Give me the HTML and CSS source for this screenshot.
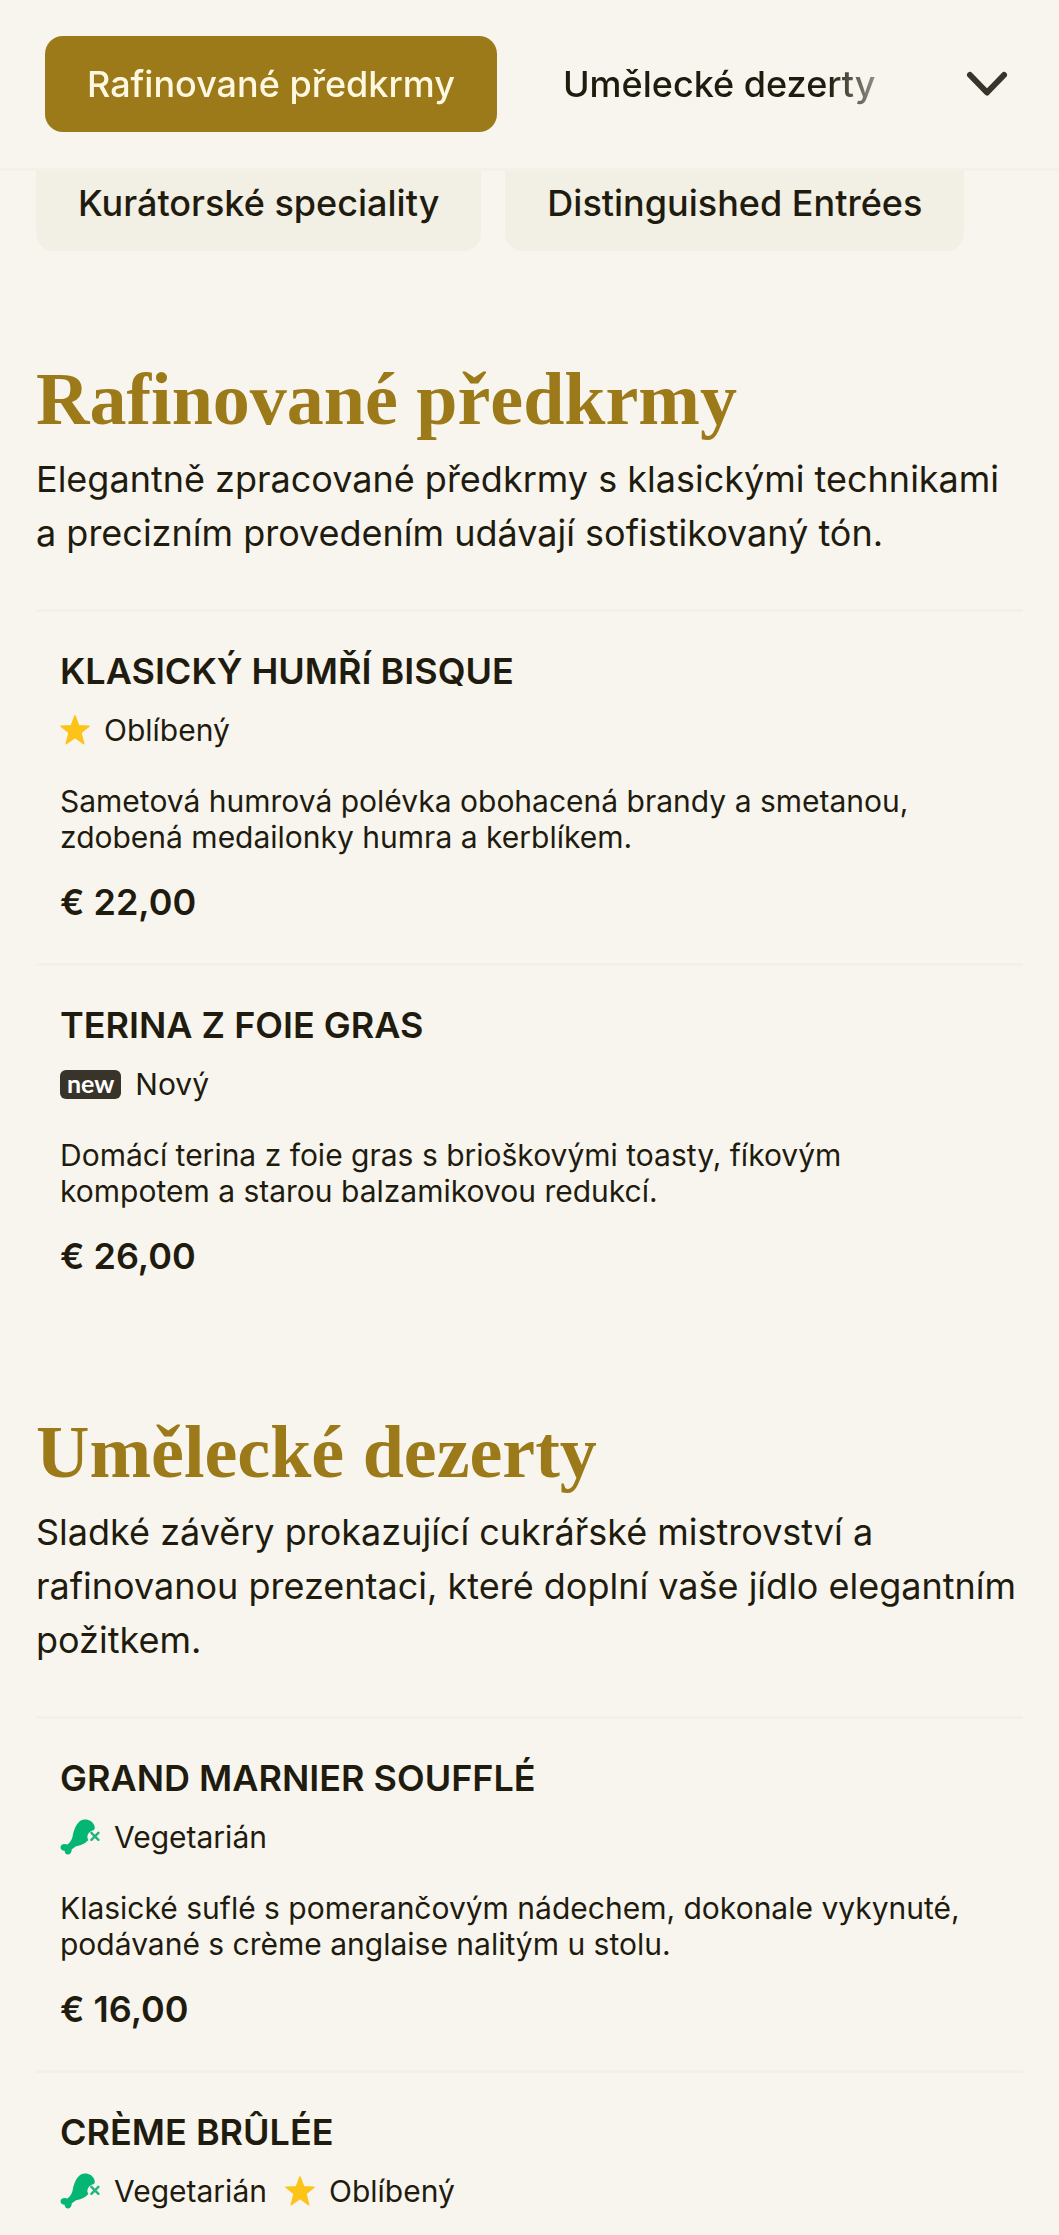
FILE: index.html
```
<!DOCTYPE html>
<html lang="cs">
<head>
    <meta charset="UTF-8">
    <meta name="viewport" content="width=device-width, initial-scale=1.0">
    <title>Menu</title>
    <link rel="stylesheet" href="styles.css">
</head>
<body>
    <!-- Shared icons -->
    <svg class="icon-defs" aria-hidden="true">
        <symbol id="icon-star" viewBox="0 0 30 30">
            <path d="M15 1 L18.6 10.8 L29 11.200 L20.800 17.700 L23.700 28.600 L15 22.400 L6.300 28.600 L9.200 17.700 L1 11.200 L11.400 10.800 Z" fill="#fcc419" stroke="#fcc419" stroke-width="1.600" stroke-linejoin="round"/>
        </symbol>
        <symbol id="icon-veggie" viewBox="0 0 40 36">
            <path d="M12.6 17.500 C13.600 12 15.500 6 19.500 2.600 C24.500 -1.200 32 .5 34.400 6.800 C35 8.500 34.900 10 34 11 C31 11.800 28 13.800 27.400 17 C27.200 18.700 27.800 20 28.400 21 C25 25 20.500 26.200 15.600 27.400 L11.600 30.600 C12 33 10.200 35.600 7.800 35.600 C5.800 35.600 4.800 34 4.600 31.800 C2 31.600 .5 30.200 .5 28.300 C.6 25.500 4 24.200 7.400 25.600 C10 23.500 11.800 21 12.600 17.500 Z" fill="#04b574"/>
            <path d="M31.400 13.800 L38.400 20.800 M38.400 13.800 L31.400 20.800" fill="none" stroke="#20b57f" stroke-width="2.400" stroke-linecap="round"/>
        </symbol>
    </svg>

    <header class="topbar">
        <nav class="tabs">
            <a class="tab active" href="#predkrmy">Rafinované předkrmy</a>
            <a class="tab" href="#dezerty">Umělecké dezerty</a>
        </nav>
        <button class="toggle" type="button" aria-label="Zobrazit kategorie">
            <svg viewBox="0 0 42 26" aria-hidden="true">
                <path d="M4 4 L21 21.500 L38 4" fill="none" stroke="#38342a" stroke-width="6" stroke-linecap="round" stroke-linejoin="round"/>
            </svg>
        </button>
    </header>

    <main class="menu">
        <div class="chips">
            <a class="chip" href="#speciality">Kurátorské speciality</a>
            <a class="chip" href="#entrees">Distinguished Entrées</a>
        </div>

        <section class="category" id="predkrmy">
            <h2>Rafinované předkrmy</h2>
            <p class="intro">Elegantně zpracované předkrmy s klasickými technikami a precizním provedením udávají sofistikovaný tón.</p>

            <article class="item">
                <h3>Klasický humří bisque</h3>
                <ul class="tags">
                    <li><svg class="star" aria-hidden="true"><use href="#icon-star"/></svg>Oblíbený</li>
                </ul>
                <p class="description">Sametová humrová polévka obohacená brandy a smetanou, zdobená medailonky humra a kerblíkem.</p>
                <p class="price">€ 22,00</p>
            </article>

            <article class="item">
                <h3>Terina z foie gras</h3>
                <ul class="tags">
                    <li><span class="badge">new</span>Nový</li>
                </ul>
                <p class="description">Domácí terina z foie gras s brioškovými toasty, fíkovým kompotem a starou balzamikovou redukcí.</p>
                <p class="price">€ 26,00</p>
            </article>
        </section>

        <section class="category" id="dezerty">
            <h2>Umělecké dezerty</h2>
            <p class="intro">Sladké závěry prokazující cukrářské mistrovství a rafinovanou prezentaci, které doplní vaše jídlo elegantním požitkem.</p>

            <article class="item">
                <h3>Grand Marnier Soufflé</h3>
                <ul class="tags">
                    <li><svg class="veggie" aria-hidden="true"><use href="#icon-veggie"/></svg>Vegetarián</li>
                </ul>
                <p class="description">Klasické suflé s pomerančovým nádechem, dokonale vykynuté, podávané s crème anglaise nalitým u stolu.</p>
                <p class="price">€ 16,00</p>
            </article>

            <article class="item">
                <h3>Crème brûlée</h3>
                <ul class="tags">
                    <li><svg class="veggie" aria-hidden="true"><use href="#icon-veggie"/></svg>Vegetarián</li>
                    <li><svg class="star" aria-hidden="true"><use href="#icon-star"/></svg>Oblíbený</li>
                </ul>
            </article>
        </section>
    </main>
</body>
</html>
```
FILE: styles.css
```
* {
    box-sizing: border-box;
}

body {
    margin: 0;
    font-family: Inter, "Noto Sans", sans-serif;
    font-size: 36px;
    line-height: 54px;
    color: #1f1c0f;
    background: #f8f5ee;
}

h2, h3, p, ul {
    margin: 0;
    padding: 0;
}

a {
    color: inherit;
    text-decoration: none;
}

.icon-defs {
    position: absolute;
    width: 0;
    height: 0;
}

/* Top navigation */
.topbar {
    position: sticky;
    top: 0;
    z-index: 1;
    display: flex;
    align-items: center;
    justify-content: space-between;
    height: 171px;
    padding: 0 45px;
    background: #f8f5ee;
    border-bottom: 3px solid #f4f1e9;
}

.tabs {
    display: flex;
    gap: 24px;
    overflow: hidden;
    -webkit-mask-image: linear-gradient(to right, #000 calc(100% - 90px), transparent);
    mask-image: linear-gradient(to right, #000 calc(100% - 90px), transparent);
}

.tab, .chip {
    padding: 21px 42px;
    border-radius: 18px;
    font-weight: 500;
    white-space: nowrap;
}

.tab.active {
    color: #fff8e1;
    background: #9c7a1a;
}

.toggle {
    display: flex;
    padding: 6px;
    background: none;
    border: none;
    cursor: pointer;
}

.toggle svg {
    width: 42px;
    height: 26px;
}

.menu {
    padding: 0 36px;
}

/* The chips scroll under the top bar */
.chips {
    display: flex;
    gap: 24px;
    margin: -16px 0 103px;
}

.chip {
    background: #f2efe4;
}

/* Categories */
.category {
    margin-bottom: 90px;
}

.category:last-child {
    margin-bottom: 0;
}

.category h2 {
    font-family: "Liberation Serif", serif;
    font-size: 74px;
    line-height: 90px;
    font-weight: bold;
    color: #9c7a1a;
}

.intro {
    margin: 8px 0 49px;
}

.item {
    padding: 35px 24px 34px;
    border-top: 3px solid #f3f0e8;
}

.category:last-child .item:last-child {
    padding-bottom: 0;
}

.item h3 {
    font-size: 36px;
    line-height: 48px;
    font-weight: 600;
    text-transform: uppercase;
}

.tags {
    display: flex;
    gap: 18px;
    margin: 17px 0 35px;
    font-size: 30px;
    line-height: 36px;
    list-style: none;
}

.tags:last-child {
    margin-bottom: 0;
}

.tags li {
    display: flex;
    align-items: center;
    gap: 14px;
}

.star {
    width: 30px;
    height: 30px;
}

.veggie {
    width: 40px;
    height: 36px;
}

.badge {
    padding: 0 7px 3px;
    border-radius: 6px;
    font-family: Lato, sans-serif;
    font-size: 25px;
    line-height: 26px;
    font-weight: 700;
    color: #fff;
    background: #38342a;
}

.description {
    font-size: 30px;
    line-height: 36px;
}

.price {
    margin-top: 20px;
    line-height: 54px;
    font-weight: 600;
}
```
